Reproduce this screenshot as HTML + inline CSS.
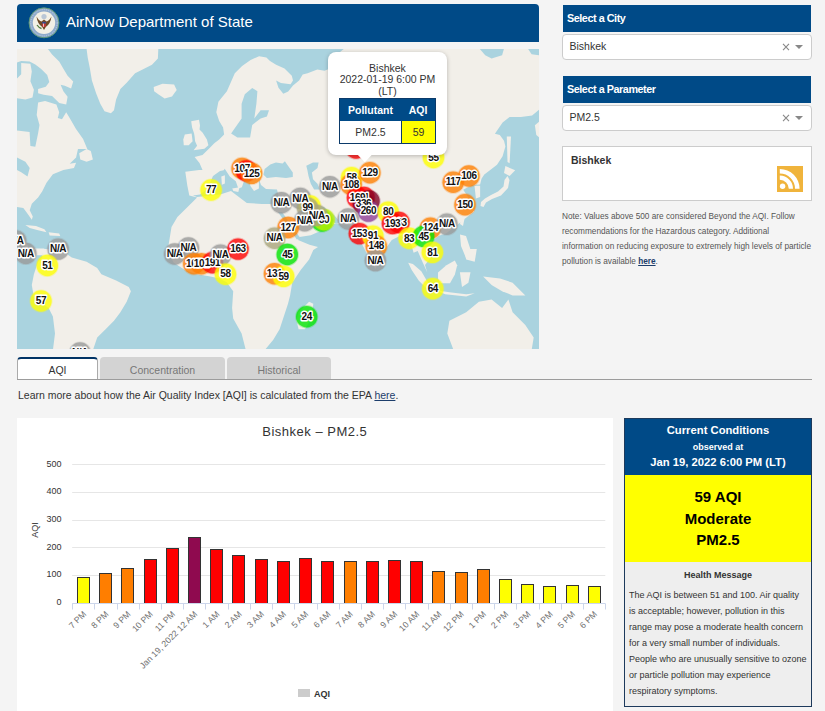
<!DOCTYPE html>
<html><head><meta charset="utf-8">
<style>
*{margin:0;padding:0;box-sizing:border-box}
html,body{width:825px;height:711px;overflow:hidden;background:#f4f4f4;font-family:"Liberation Sans",sans-serif;color:#333}
.a{position:absolute}
#hdr{left:17px;top:4px;width:522px;height:38px;background:#004a87;border-radius:4px 4px 0 0}
#hdr .t{left:49px;top:9px;font-size:15px;color:#fff;white-space:nowrap}
#map{left:17px;top:49px;width:522px;height:300px;background:#aad3df;overflow:hidden}
.sh{left:563px;width:248px;height:27px;background:#004a87;color:#fff;font-weight:bold;font-size:10.8px;letter-spacing:-0.45px;padding:7px 0 0 4px;white-space:nowrap}
.sel{left:562px;width:249.5px;height:26px;background:#fff;border:1px solid #ccc;border-radius:4px;font-size:10.5px;padding:5px 0 0 6.5px}
.sel .x{position:absolute;left:219px;top:8px}
.sel .ar{position:absolute;left:232px;top:10px;width:0;height:0;border-left:4px solid transparent;border-right:4px solid transparent;border-top:4px solid #888}
#cbox{left:562px;top:146px;width:250px;height:55px;background:#fff;border:1px solid #ccc}
#note{left:562px;top:209px;width:250px;font-size:8.25px;line-height:15px;color:#555}
#note b{color:#1c3d6b;text-decoration:underline}
.tab{top:357px;height:23px;background:#d3d3d3;border-radius:4px 4px 0 0;font-size:10.5px;color:#777;text-align:center;padding-top:7px}
#tabline{left:17px;top:379px;width:795px;height:1px;background:#9c9c9c}
#learn{left:18px;top:389px;font-size:10.5px;color:#333;white-space:nowrap}
#learn u{color:#1c3d6b}
#chart{left:17px;top:418px;width:596px;height:293px;background:#fff}
#cc{left:624px;top:418px;width:188px;height:289px;border:1px solid #1d3a5c;background:#eeeeee}
</style></head><body>
<div id="hdr" class="a">
  <svg class="a" style="left:11px;top:3px" width="32" height="32" viewBox="0 0 32 32">
    <circle cx="16" cy="15.8" r="15" fill="#8faacb" stroke="#5f9a6e" stroke-width="0.9"/>
    <circle cx="16" cy="15.8" r="13.2" fill="none" stroke="#c9d6e6" stroke-width="0.8" stroke-dasharray="1 1.2"/>
    <circle cx="16" cy="15.8" r="11.2" fill="#f3f0e6"/>
    <circle cx="16" cy="9.5" r="2.6" fill="#b9c6d6"/>
    <path d="M8.5 9.5 Q9.5 17 14.2 20 L16 23 L17.8 20 Q22.5 17 23.5 9.5 Q21 14 18.5 14.5 L16 12.5 L13.5 14.5 Q11 14 8.5 9.5Z" fill="#6e4a26"/>
    <path d="M9 18 Q11 21 13.5 21.5" stroke="#4f7a3a" stroke-width="1.3" fill="none"/>
    <rect x="14.2" y="14.8" width="3.6" height="5" fill="#c8363a"/>
    <rect x="14.2" y="14.8" width="3.6" height="1.8" fill="#2d4e8e"/>
    <rect x="15.3" y="16.6" width="0.7" height="3.2" fill="#fff"/>
  </svg>
  <div class="a t">AirNow Department of State</div>
</div>
<div id="map" class="a">
<svg class="a" style="left:-17px;top:-49px" width="825" height="711" viewBox="0 0 825 711">
<polygon points="17.0,49.0 47.9,49.0 52.1,54.6 59.2,61.6 63.4,68.7 67.6,75.7 73.2,81.6 71.1,88.4 64.8,85.8 60.6,84.8 63.4,91.2 67.6,96.8 66.2,104.5 59.2,103.1 52.1,96.1 43.7,94.7 38.1,93.3 38.1,89.1 45.8,86.7 49.3,82.0 47.2,75.0 40.9,68.7 35.3,64.5 29.6,61.6 21.2,60.9 17.0,62.4" fill="#f2efe9"/>
<polygon points="21.2,63.1 30.4,63.8 31.8,71.5 30.4,81.3 33.9,89.8 32.5,97.5 25.4,99.6 17.0,98.2 17.0,78.5 21.2,74.3" fill="#f2efe9"/>
<polygon points="38.1,102.4 45.1,101.0 56.4,104.5 59.2,112.2 57.8,117.9 62.0,119.3 66.2,112.2 70.4,119.3 76.0,129.1 83.1,139.0 87.3,148.9 17.0,148.9 17.0,130.5 29.6,131.9 30.4,146.0 35.3,146.7 38.1,133.3 39.5,124.9 36.7,115.1" fill="#f2efe9"/>
<polygon points="86.6,49.0 158.3,49.0 157.9,58.5 152.0,64.8 143.6,69.0 135.1,73.3 126.7,82.7 120.4,89.1 116.1,99.6 114.0,110.2 110.9,113.3 104.5,111.2 100.3,103.8 96.1,93.3 91.9,80.6 89.8,68.0 87.7,57.4" fill="#f2efe9"/>
<polygon points="153.7,87.0 162.5,83.8 174.1,84.4 176.7,90.1 172.0,96.5 164.6,98.6 158.3,94.3 154.1,91.2" fill="#f2efe9"/>
<polygon points="17.0,147.9 78.2,147.9 76.1,157.4 69.7,163.8 76.1,162.7 74.0,168.0 63.4,170.1 52.9,174.3 46.5,182.7 42.3,191.2 38.1,197.5 31.8,203.8 29.7,210.2 32.8,216.5 31.8,219.7 26.5,212.3 23.3,208.1 17.0,207.0" fill="#f2efe9"/>
<polygon points="79.2,153.2 86.6,149.0 90.8,151.1 92.9,159.5 86.6,161.7 80.3,159.5" fill="#f2efe9"/>
<polygon points="25.4,224.9 36.0,226.0 44.4,229.2 46.5,232.3 38.1,230.2 29.7,228.1" fill="#f2efe9"/>
<polygon points="48.6,232.3 59.2,233.4 60.2,235.9 49.7,235.5" fill="#f2efe9"/>
<polygon points="17.0,233.4 23.3,237.6 29.7,249.0 17.0,249.0" fill="#f2efe9"/>
<polygon points="42.3,249.0 59.2,249.0 71.8,257.4 86.6,261.7 97.2,268.0 101.4,274.3 116.1,280.6 128.8,287.0 130.9,291.2 126.7,301.7 120.4,312.3 114.0,320.7 105.6,329.2 97.2,337.6 92.9,350.2 52.9,350.2 55.0,333.4 52.9,316.5 48.6,308.1 33.9,297.5 31.8,284.9 33.9,274.3 38.1,261.7 42.3,257.4" fill="#f2efe9"/>
<polygon points="17.0,248.6 44.4,248.6 42.3,255.3 29.7,255.3 17.0,257.4" fill="#f2efe9"/>
<polygon points="191.2,121.2 199.0,119.7 200.0,125.6 199.5,129.5 202.5,132.5 206.9,139.4 208.4,145.3 204.4,148.7 193.6,150.2 197.1,145.8 195.1,141.3 194.6,136.4 194.1,133.5 192.1,127.6" fill="#f2efe9"/>
<polygon points="184.8,134.4 191.6,133.5 192.6,141.3 188.7,145.3 183.8,145.3 183.3,139.4" fill="#f2efe9"/>
<polygon points="194.6,157.1 202.5,155.1 209.4,148.2 214.3,143.3 219.2,139.4 224.1,134.4 223.1,127.6 219.2,121.0 216.3,112.3 218.4,101.7 226.9,91.2 234.8,73.2 242.1,66.0 250.6,59.9 259.1,56.3 266.4,57.5 270.0,61.1 276.1,64.8 284.5,68.4 291.8,75.7 293.0,80.5 290.6,84.2 280.9,82.9 276.1,80.5 278.5,87.8 283.3,93.8 288.2,91.4 293.0,85.4 299.1,80.5 302.7,74.5 307.6,73.2 317.3,69.6 324.5,70.8 330.0,68.4 336.0,60.0 340.0,52.0 345.0,48.0 540.0,48.0 539.0,109.8 532.1,115.5 520.9,116.9 509.6,116.9 502.6,122.5 494.9,133.7 499.8,135.1 504.0,140.8 505.4,146.4 502.6,156.2 497.0,164.7 489.9,170.3 484.3,174.5 481.5,178.7 480.1,184.4 472.0,185.0 463.2,189.7 470.0,200.0 474.2,211.5 463.2,220.0 456.0,226.1 446.3,233.3 439.0,235.8 432.0,241.0 426.2,249.0 432.0,256.0 425.0,265.0 427.3,272.4 422.5,262.0 417.7,250.9 413.6,252.7 410.0,240.0 402.7,234.5 391.8,240.0 382.7,252.7 375.5,269.1 368.2,256.4 359.1,238.2 350.0,225.5 337.3,223.6 326.4,225.5 320.9,230.8 310.8,235.2 299.4,237.1 298.0,240.0 309.5,244.7 318.0,247.0 313.3,250.0 309.1,259.5 300.7,270.1 292.2,282.7 290.1,295.4 288.0,303.8 283.8,316.5 279.6,329.2 273.3,339.7 264.8,350.0 245.8,350.0 241.6,333.4 233.2,318.6 232.1,308.1 233.2,291.2 226.7,282.2 218.8,278.2 209.0,276.3 197.1,274.3 185.3,270.3 173.5,262.5 167.6,250.6 169.6,238.8 171.5,227.0 177.4,217.1 187.3,207.3 197.1,197.4 189.3,195.5 187.3,185.6 185.3,171.8 199.1,169.9 202.5,170.0 199.5,163.0" fill="#f2efe9"/>
<polygon points="298.6,312.3 309.1,301.7 313.3,303.8 311.2,318.6 304.9,329.2 298.6,329.2 296.5,320.7" fill="#f2efe9"/>
<polygon points="408.2,262.8 412.9,264.0 421.3,271.2 426.1,279.6 430.9,286.7 426.1,287.9 418.9,280.8 411.7,270.0" fill="#f2efe9"/>
<polygon points="438.0,272.4 446.4,265.2 454.8,260.4 457.2,265.2 454.8,274.8 450.0,283.2 440.4,283.2 438.0,278.4" fill="#f2efe9"/>
<polygon points="459.9,272.2 470.5,272.2 468.4,282.7 462.0,287.0" fill="#f2efe9"/>
<polygon points="434.6,290.1 449.4,292.2 466.2,294.3 474.7,293.3 466.2,296.5 445.2,294.3" fill="#f2efe9"/>
<polygon points="483.1,276.4 500.0,278.5 512.6,282.7 525.3,295.4 512.6,295.4 502.1,291.2 491.6,284.9" fill="#f2efe9"/>
<polygon points="449.4,320.7 466.2,312.3 478.9,301.7 491.6,299.6 502.1,308.1 508.4,299.6 512.6,312.3 525.3,324.9 533.7,337.6 531.6,350.2 453.6,350.2 447.3,333.4" fill="#f2efe9"/>
<polygon points="464.1,249.0 476.8,249.0 474.7,261.7 466.2,259.5" fill="#f2efe9"/>
<polygon points="17.0,157.4 25.4,161.7 29.7,168.0 27.5,176.4 21.2,172.2 17.0,170.1" fill="#aad3df"/>
<polygon points="478.9,47.9 504.2,47.9 502.1,55.3 491.6,58.5 485.2,55.3" fill="#aad3df"/>
<polygon points="527.4,47.9 540.1,47.9 540.1,55.3 531.6,54.3" fill="#aad3df"/>
<polygon points="244.8,94.3 252.2,88.0 257.4,91.2 256.4,103.8 254.3,118.6 260.6,110.2 269.0,110.2 266.9,116.5 260.6,118.6 252.2,124.9 250.1,137.6 237.4,137.6 231.1,133.4 241.6,118.6 241.6,103.8" fill="#aad3df"/>
<polygon points="193.0,195.5 200.0,194.5 206.0,190.0 210.0,183.0 213.0,176.0 220.0,171.0 223.7,170.3 231.0,160.6 249.2,176.4 258.9,178.8 261.0,185.0 266.0,189.0 277.0,189.5 278.5,196.0 275.0,204.0 262.0,204.0 246.8,203.0 231.0,190.9 220.1,194.5 197.0,197.0" fill="#aad3df"/>
<polygon points="264.6,169.1 270.3,164.6 275.9,162.4 282.6,163.5 284.9,161.3 287.1,164.6 292.8,172.5 292.8,177.0 286.0,178.1 275.9,177.0 266.9,178.1 263.5,174.8" fill="#aad3df"/>
<polygon points="306.3,165.8 313.0,162.4 318.6,162.4 317.5,168.0 311.9,172.5 313.0,179.3 317.5,183.8 319.8,189.4 314.1,189.4 310.8,183.8 308.5,175.9 307.4,170.3" fill="#aad3df"/>
<polygon points="318.0,206.0 324.0,207.0 334.0,215.0 340.0,222.0 336.0,224.0 326.0,216.0 318.0,210.0" fill="#aad3df"/>
<polygon points="278.0,212.0 282.0,212.0 300.6,238.4 296.8,239.6" fill="#aad3df"/>
<polygon points="506.8,136.6 511.0,136.6 509.6,163.3 507.5,161.9" fill="#f2efe9"/>
<polygon points="505.4,166.1 515.2,170.3 509.6,175.9 504.0,173.1" fill="#f2efe9"/>
<polygon points="507.5,176.0 509.5,180.0 508.0,188.0 501.0,195.5 492.0,199.0 486.0,202.5 483.5,207.0 480.5,206.0 481.0,202.0 485.0,198.5 491.0,195.0 498.0,191.5 503.5,186.5 504.5,180.0" fill="#f2efe9"/>
<polygon points="474.5,185.8 480.1,185.8 480.1,197.0 475.9,198.4" fill="#f2efe9"/>
<polygon points="534.9,125.3 540.0,121.0 540.0,138.0 536.3,135.1" fill="#f2efe9"/>
<polygon points="460.8,218.8 464.5,218.8 463.0,226.0 460.0,224.0" fill="#f2efe9"/>
<polygon points="460.0,234.5 466.0,236.0 470.0,248.0 473.0,260.0 466.0,258.0 461.0,246.0" fill="#f2efe9"/>
<polygon points="222.5,159.4 231.0,158.2 239.5,167.9 248.0,176.4 249.2,181.2 244.3,180.0 241.9,187.3 238.3,188.5 235.8,181.2 229.8,176.4 224.9,169.1" fill="#f2efe9"/>
<polygon points="232.2,188.5 239.5,187.3 238.3,192.1 233.4,190.9" fill="#f2efe9"/>
<polygon points="221.3,176.4 224.9,175.2 224.9,183.6 221.9,184.8" fill="#f2efe9"/>
<polygon points="249.2,176.4 258.9,177.6 258.9,188.5 254.0,190.9 250.4,186.1" fill="#f2efe9"/>
<g font-family="Liberation Sans, sans-serif" font-weight="bold" font-size="10" letter-spacing="-0.4" text-anchor="middle">
<circle cx="356" cy="148" r="11.6" fill="#ff0000" fill-opacity="0.25"/><circle cx="356" cy="148" r="10.7" fill="#ff0000" fill-opacity="0.72"/>
<circle cx="15.7" cy="240.8" r="11.6" fill="#999999" fill-opacity="0.25"/><circle cx="15.7" cy="240.8" r="10.7" fill="#999999" fill-opacity="0.72"/>
<circle cx="25.8" cy="253.5" r="11.6" fill="#999999" fill-opacity="0.25"/><circle cx="25.8" cy="253.5" r="10.7" fill="#999999" fill-opacity="0.72"/>
<circle cx="58.1" cy="249.1" r="11.6" fill="#999999" fill-opacity="0.25"/><circle cx="58.1" cy="249.1" r="10.7" fill="#999999" fill-opacity="0.72"/>
<circle cx="47.3" cy="265.5" r="11.6" fill="#ffff00" fill-opacity="0.25"/><circle cx="47.3" cy="265.5" r="10.7" fill="#ffff00" fill-opacity="0.72"/>
<circle cx="41" cy="301" r="11.6" fill="#ffff00" fill-opacity="0.25"/><circle cx="41" cy="301" r="10.7" fill="#ffff00" fill-opacity="0.72"/>
<circle cx="80" cy="353" r="11.6" fill="#999999" fill-opacity="0.25"/><circle cx="80" cy="353" r="10.7" fill="#999999" fill-opacity="0.72"/>
<circle cx="242.1" cy="168.4" r="11.6" fill="#ff7e00" fill-opacity="0.25"/><circle cx="242.1" cy="168.4" r="10.7" fill="#ff7e00" fill-opacity="0.72"/>
<circle cx="246.5" cy="170.9" r="11.6" fill="#ff0000" fill-opacity="0.25"/><circle cx="246.5" cy="170.9" r="10.7" fill="#ff0000" fill-opacity="0.72"/>
<circle cx="251.6" cy="173.4" r="11.6" fill="#ff7e00" fill-opacity="0.25"/><circle cx="251.6" cy="173.4" r="10.7" fill="#ff7e00" fill-opacity="0.72"/>
<circle cx="211.1" cy="190" r="11.6" fill="#ffff00" fill-opacity="0.25"/><circle cx="211.1" cy="190" r="10.7" fill="#ffff00" fill-opacity="0.72"/>
<circle cx="174.7" cy="254" r="11.6" fill="#999999" fill-opacity="0.25"/><circle cx="174.7" cy="254" r="10.7" fill="#999999" fill-opacity="0.72"/>
<circle cx="188.4" cy="248" r="11.6" fill="#999999" fill-opacity="0.25"/><circle cx="188.4" cy="248" r="10.7" fill="#999999" fill-opacity="0.72"/>
<circle cx="193.8" cy="263.8" r="11.6" fill="#ff7e00" fill-opacity="0.25"/><circle cx="193.8" cy="263.8" r="10.7" fill="#ff7e00" fill-opacity="0.72"/>
<circle cx="201.5" cy="263.8" r="11.6" fill="#ff7e00" fill-opacity="0.25"/><circle cx="201.5" cy="263.8" r="10.7" fill="#ff7e00" fill-opacity="0.72"/>
<circle cx="212.4" cy="262.7" r="11.6" fill="#ff0000" fill-opacity="0.25"/><circle cx="212.4" cy="262.7" r="10.7" fill="#ff0000" fill-opacity="0.72"/>
<circle cx="220.5" cy="255.1" r="11.6" fill="#999999" fill-opacity="0.25"/><circle cx="220.5" cy="255.1" r="10.7" fill="#999999" fill-opacity="0.72"/>
<circle cx="238" cy="249.1" r="11.6" fill="#ff0000" fill-opacity="0.25"/><circle cx="238" cy="249.1" r="10.7" fill="#ff0000" fill-opacity="0.72"/>
<circle cx="225.5" cy="274.2" r="11.6" fill="#ffff00" fill-opacity="0.25"/><circle cx="225.5" cy="274.2" r="10.7" fill="#ffff00" fill-opacity="0.72"/>
<circle cx="281.4" cy="202.8" r="11.6" fill="#999999" fill-opacity="0.25"/><circle cx="281.4" cy="202.8" r="10.7" fill="#999999" fill-opacity="0.72"/>
<circle cx="300.3" cy="198.4" r="11.6" fill="#999999" fill-opacity="0.25"/><circle cx="300.3" cy="198.4" r="10.7" fill="#999999" fill-opacity="0.72"/>
<circle cx="310" cy="206" r="11.6" fill="#ffff00" fill-opacity="0.25"/><circle cx="310" cy="206" r="10.7" fill="#ffff00" fill-opacity="0.72"/>
<circle cx="307.6" cy="208.1" r="11.6" fill="#a9a57c" fill-opacity="0.25"/><circle cx="307.6" cy="208.1" r="10.7" fill="#a9a57c" fill-opacity="0.72"/>
<circle cx="322" cy="221" r="11.6" fill="#00e400" fill-opacity="0.25"/><circle cx="322" cy="221" r="10.7" fill="#00e400" fill-opacity="0.72"/>
<circle cx="324.1" cy="219.8" r="11.6" fill="#bff000" fill-opacity="0.25"/><circle cx="324.1" cy="219.8" r="10.7" fill="#bff000" fill-opacity="0.72"/>
<circle cx="316.8" cy="215.4" r="11.6" fill="#a9a57c" fill-opacity="0.25"/><circle cx="316.8" cy="215.4" r="10.7" fill="#a9a57c" fill-opacity="0.72"/>
<circle cx="304.7" cy="220.7" r="11.6" fill="#999999" fill-opacity="0.25"/><circle cx="304.7" cy="220.7" r="10.7" fill="#999999" fill-opacity="0.72"/>
<circle cx="288.2" cy="227.5" r="11.6" fill="#ff7e00" fill-opacity="0.25"/><circle cx="288.2" cy="227.5" r="10.7" fill="#ff7e00" fill-opacity="0.72"/>
<circle cx="274.6" cy="238.2" r="11.6" fill="#a9a57c" fill-opacity="0.25"/><circle cx="274.6" cy="238.2" r="10.7" fill="#a9a57c" fill-opacity="0.72"/>
<circle cx="287.3" cy="254.5" r="11.6" fill="#00e400" fill-opacity="0.25"/><circle cx="287.3" cy="254.5" r="10.7" fill="#00e400" fill-opacity="0.72"/>
<circle cx="274.5" cy="273.8" r="11.6" fill="#ff7e00" fill-opacity="0.25"/><circle cx="274.5" cy="273.8" r="10.7" fill="#ff7e00" fill-opacity="0.72"/>
<circle cx="283.6" cy="276.4" r="11.6" fill="#ffff00" fill-opacity="0.25"/><circle cx="283.6" cy="276.4" r="10.7" fill="#ffff00" fill-opacity="0.72"/>
<circle cx="306.7" cy="316.7" r="11.6" fill="#00e400" fill-opacity="0.25"/><circle cx="306.7" cy="316.7" r="10.7" fill="#00e400" fill-opacity="0.72"/>
<circle cx="329.9" cy="186.8" r="11.6" fill="#999999" fill-opacity="0.25"/><circle cx="329.9" cy="186.8" r="10.7" fill="#999999" fill-opacity="0.72"/>
<circle cx="351.6" cy="177.6" r="11.6" fill="#ffff00" fill-opacity="0.25"/><circle cx="351.6" cy="177.6" r="10.7" fill="#ffff00" fill-opacity="0.72"/>
<circle cx="369.9" cy="172.7" r="11.6" fill="#ff7e00" fill-opacity="0.25"/><circle cx="369.9" cy="172.7" r="10.7" fill="#ff7e00" fill-opacity="0.72"/>
<circle cx="351.2" cy="184.5" r="11.6" fill="#ff7e00" fill-opacity="0.25"/><circle cx="351.2" cy="184.5" r="10.7" fill="#ff7e00" fill-opacity="0.72"/>
<circle cx="364" cy="197.5" r="11.6" fill="#ff0000" fill-opacity="0.25"/><circle cx="364" cy="197.5" r="10.7" fill="#ff0000" fill-opacity="0.72"/>
<circle cx="357.5" cy="197.8" r="11.6" fill="#ff0000" fill-opacity="0.25"/><circle cx="357.5" cy="197.8" r="10.7" fill="#ff0000" fill-opacity="0.72"/>
<circle cx="369" cy="201" r="11.6" fill="#7e0023" fill-opacity="0.25"/><circle cx="369" cy="201" r="10.7" fill="#7e0023" fill-opacity="0.72"/>
<circle cx="363.5" cy="203.7" r="11.6" fill="#7e0023" fill-opacity="0.25"/><circle cx="363.5" cy="203.7" r="10.7" fill="#7e0023" fill-opacity="0.72"/>
<circle cx="368.4" cy="211.1" r="11.6" fill="#8f3f97" fill-opacity="0.25"/><circle cx="368.4" cy="211.1" r="10.7" fill="#8f3f97" fill-opacity="0.72"/>
<circle cx="348.2" cy="219" r="11.6" fill="#999999" fill-opacity="0.25"/><circle cx="348.2" cy="219" r="10.7" fill="#999999" fill-opacity="0.72"/>
<circle cx="388.2" cy="212.1" r="11.6" fill="#ffff00" fill-opacity="0.25"/><circle cx="388.2" cy="212.1" r="10.7" fill="#ffff00" fill-opacity="0.72"/>
<circle cx="399" cy="222.5" r="11.6" fill="#ff0000" fill-opacity="0.25"/><circle cx="399" cy="222.5" r="10.7" fill="#ff0000" fill-opacity="0.72"/>
<circle cx="392.5" cy="223.5" r="11.6" fill="#ff0000" fill-opacity="0.25"/><circle cx="392.5" cy="223.5" r="10.7" fill="#ff0000" fill-opacity="0.72"/>
<circle cx="359.4" cy="233.6" r="11.6" fill="#ff0000" fill-opacity="0.25"/><circle cx="359.4" cy="233.6" r="10.7" fill="#ff0000" fill-opacity="0.72"/>
<circle cx="372.9" cy="236.1" r="11.6" fill="#ffff00" fill-opacity="0.25"/><circle cx="372.9" cy="236.1" r="10.7" fill="#ffff00" fill-opacity="0.72"/>
<circle cx="376.3" cy="246.2" r="11.6" fill="#ff7e00" fill-opacity="0.25"/><circle cx="376.3" cy="246.2" r="10.7" fill="#ff7e00" fill-opacity="0.72"/>
<circle cx="375.4" cy="260.6" r="11.6" fill="#999999" fill-opacity="0.25"/><circle cx="375.4" cy="260.6" r="10.7" fill="#999999" fill-opacity="0.72"/>
<circle cx="409.1" cy="238.3" r="11.6" fill="#ffff00" fill-opacity="0.25"/><circle cx="409.1" cy="238.3" r="10.7" fill="#ffff00" fill-opacity="0.72"/>
<circle cx="430.4" cy="228.1" r="11.6" fill="#ff7e00" fill-opacity="0.25"/><circle cx="430.4" cy="228.1" r="10.7" fill="#ff7e00" fill-opacity="0.72"/>
<circle cx="446.9" cy="224.2" r="11.6" fill="#999999" fill-opacity="0.25"/><circle cx="446.9" cy="224.2" r="10.7" fill="#999999" fill-opacity="0.72"/>
<circle cx="423.6" cy="236.4" r="11.6" fill="#00e400" fill-opacity="0.25"/><circle cx="423.6" cy="236.4" r="10.7" fill="#00e400" fill-opacity="0.72"/>
<circle cx="432.4" cy="252.4" r="11.6" fill="#ffff00" fill-opacity="0.25"/><circle cx="432.4" cy="252.4" r="10.7" fill="#ffff00" fill-opacity="0.72"/>
<circle cx="432.8" cy="288.7" r="11.6" fill="#ffff00" fill-opacity="0.25"/><circle cx="432.8" cy="288.7" r="10.7" fill="#ffff00" fill-opacity="0.72"/>
<circle cx="433.5" cy="157.5" r="11.6" fill="#ffff00" fill-opacity="0.25"/><circle cx="433.5" cy="157.5" r="10.7" fill="#ffff00" fill-opacity="0.72"/>
<circle cx="453.2" cy="182.2" r="11.6" fill="#ff7e00" fill-opacity="0.25"/><circle cx="453.2" cy="182.2" r="10.7" fill="#ff7e00" fill-opacity="0.72"/>
<circle cx="468.9" cy="176" r="11.6" fill="#ff7e00" fill-opacity="0.25"/><circle cx="468.9" cy="176" r="10.7" fill="#ff7e00" fill-opacity="0.72"/>
<circle cx="465" cy="204.7" r="11.6" fill="#ff7e00" fill-opacity="0.25"/><circle cx="465" cy="204.7" r="10.7" fill="#ff7e00" fill-opacity="0.72"/>
<text x="15.7" y="244.0" fill="#111" stroke="#fff" stroke-width="2.8" stroke-linejoin="round" paint-order="stroke">N/A</text>
<text x="25.8" y="256.7" fill="#111" stroke="#fff" stroke-width="2.8" stroke-linejoin="round" paint-order="stroke">N/A</text>
<text x="58.1" y="252.3" fill="#111" stroke="#fff" stroke-width="2.8" stroke-linejoin="round" paint-order="stroke">N/A</text>
<text x="47.3" y="268.7" fill="#111" stroke="#fff" stroke-width="2.8" stroke-linejoin="round" paint-order="stroke">51</text>
<text x="41" y="304.2" fill="#111" stroke="#fff" stroke-width="2.8" stroke-linejoin="round" paint-order="stroke">57</text>
<text x="80" y="356.2" fill="#111" stroke="#fff" stroke-width="2.8" stroke-linejoin="round" paint-order="stroke">N/A</text>
<text x="242.1" y="171.6" fill="#111" stroke="#fff" stroke-width="2.8" stroke-linejoin="round" paint-order="stroke">107</text>
<text x="251.6" y="176.6" fill="#111" stroke="#fff" stroke-width="2.8" stroke-linejoin="round" paint-order="stroke">125</text>
<text x="211.1" y="193.2" fill="#111" stroke="#fff" stroke-width="2.8" stroke-linejoin="round" paint-order="stroke">77</text>
<text x="174.7" y="257.2" fill="#111" stroke="#fff" stroke-width="2.8" stroke-linejoin="round" paint-order="stroke">N/A</text>
<text x="188.4" y="251.2" fill="#111" stroke="#fff" stroke-width="2.8" stroke-linejoin="round" paint-order="stroke">N/A</text>
<text x="193.8" y="267.0" fill="#111" stroke="#fff" stroke-width="2.8" stroke-linejoin="round" paint-order="stroke">101</text>
<text x="201.5" y="267.0" fill="#111" stroke="#fff" stroke-width="2.8" stroke-linejoin="round" paint-order="stroke">101</text>
<text x="212.4" y="265.9" fill="#111" stroke="#fff" stroke-width="2.8" stroke-linejoin="round" paint-order="stroke">191</text>
<text x="220.5" y="258.3" fill="#111" stroke="#fff" stroke-width="2.8" stroke-linejoin="round" paint-order="stroke">N/A</text>
<text x="238" y="252.3" fill="#111" stroke="#fff" stroke-width="2.8" stroke-linejoin="round" paint-order="stroke">163</text>
<text x="225.5" y="277.4" fill="#111" stroke="#fff" stroke-width="2.8" stroke-linejoin="round" paint-order="stroke">58</text>
<text x="281.4" y="206.0" fill="#111" stroke="#fff" stroke-width="2.8" stroke-linejoin="round" paint-order="stroke">N/A</text>
<text x="300.3" y="201.6" fill="#111" stroke="#fff" stroke-width="2.8" stroke-linejoin="round" paint-order="stroke">N/A</text>
<text x="307.6" y="211.3" fill="#111" stroke="#fff" stroke-width="2.8" stroke-linejoin="round" paint-order="stroke">99</text>
<text x="324.1" y="223.0" fill="#111" stroke="#fff" stroke-width="2.8" stroke-linejoin="round" paint-order="stroke">30</text>
<text x="316.8" y="218.6" fill="#111" stroke="#fff" stroke-width="2.8" stroke-linejoin="round" paint-order="stroke">N/A</text>
<text x="304.7" y="223.9" fill="#111" stroke="#fff" stroke-width="2.8" stroke-linejoin="round" paint-order="stroke">N/A</text>
<text x="288.2" y="230.7" fill="#111" stroke="#fff" stroke-width="2.8" stroke-linejoin="round" paint-order="stroke">127</text>
<text x="274.6" y="241.4" fill="#111" stroke="#fff" stroke-width="2.8" stroke-linejoin="round" paint-order="stroke">N/A</text>
<text x="287.3" y="257.7" fill="#111" stroke="#fff" stroke-width="2.8" stroke-linejoin="round" paint-order="stroke">45</text>
<text x="274.5" y="277.0" fill="#111" stroke="#fff" stroke-width="2.8" stroke-linejoin="round" paint-order="stroke">131</text>
<text x="283.6" y="279.6" fill="#111" stroke="#fff" stroke-width="2.8" stroke-linejoin="round" paint-order="stroke">59</text>
<text x="306.7" y="319.9" fill="#111" stroke="#fff" stroke-width="2.8" stroke-linejoin="round" paint-order="stroke">24</text>
<text x="329.9" y="190.0" fill="#111" stroke="#fff" stroke-width="2.8" stroke-linejoin="round" paint-order="stroke">N/A</text>
<text x="351.6" y="180.8" fill="#111" stroke="#fff" stroke-width="2.8" stroke-linejoin="round" paint-order="stroke">58</text>
<text x="369.9" y="175.9" fill="#111" stroke="#fff" stroke-width="2.8" stroke-linejoin="round" paint-order="stroke">129</text>
<text x="351.2" y="187.7" fill="#111" stroke="#fff" stroke-width="2.8" stroke-linejoin="round" paint-order="stroke">108</text>
<text x="364" y="200.7" fill="#111" stroke="#fff" stroke-width="2.8" stroke-linejoin="round" paint-order="stroke">91</text>
<text x="357.5" y="201.0" fill="#111" stroke="#fff" stroke-width="2.8" stroke-linejoin="round" paint-order="stroke">169</text>
<text x="363.5" y="206.9" fill="#111" stroke="#fff" stroke-width="2.8" stroke-linejoin="round" paint-order="stroke">336</text>
<text x="368.4" y="214.3" fill="#111" stroke="#fff" stroke-width="2.8" stroke-linejoin="round" paint-order="stroke">260</text>
<text x="348.2" y="222.2" fill="#111" stroke="#fff" stroke-width="2.8" stroke-linejoin="round" paint-order="stroke">N/A</text>
<text x="388.2" y="215.3" fill="#111" stroke="#fff" stroke-width="2.8" stroke-linejoin="round" paint-order="stroke">80</text>
<text x="399" y="225.7" fill="#111" stroke="#fff" stroke-width="2.8" stroke-linejoin="round" paint-order="stroke">133</text>
<text x="392.5" y="226.7" fill="#111" stroke="#fff" stroke-width="2.8" stroke-linejoin="round" paint-order="stroke">193</text>
<text x="359.4" y="236.8" fill="#111" stroke="#fff" stroke-width="2.8" stroke-linejoin="round" paint-order="stroke">153</text>
<text x="372.9" y="239.3" fill="#111" stroke="#fff" stroke-width="2.8" stroke-linejoin="round" paint-order="stroke">91</text>
<text x="376.3" y="249.4" fill="#111" stroke="#fff" stroke-width="2.8" stroke-linejoin="round" paint-order="stroke">148</text>
<text x="375.4" y="263.8" fill="#111" stroke="#fff" stroke-width="2.8" stroke-linejoin="round" paint-order="stroke">N/A</text>
<text x="409.1" y="241.5" fill="#111" stroke="#fff" stroke-width="2.8" stroke-linejoin="round" paint-order="stroke">83</text>
<text x="430.4" y="231.3" fill="#111" stroke="#fff" stroke-width="2.8" stroke-linejoin="round" paint-order="stroke">124</text>
<text x="446.9" y="227.4" fill="#111" stroke="#fff" stroke-width="2.8" stroke-linejoin="round" paint-order="stroke">N/A</text>
<text x="423.6" y="239.6" fill="#111" stroke="#fff" stroke-width="2.8" stroke-linejoin="round" paint-order="stroke">45</text>
<text x="432.4" y="255.6" fill="#111" stroke="#fff" stroke-width="2.8" stroke-linejoin="round" paint-order="stroke">81</text>
<text x="432.8" y="291.9" fill="#111" stroke="#fff" stroke-width="2.8" stroke-linejoin="round" paint-order="stroke">64</text>
<text x="433.5" y="160.7" fill="#111" stroke="#fff" stroke-width="2.8" stroke-linejoin="round" paint-order="stroke">55</text>
<text x="453.2" y="185.4" fill="#111" stroke="#fff" stroke-width="2.8" stroke-linejoin="round" paint-order="stroke">117</text>
<text x="468.9" y="179.2" fill="#111" stroke="#fff" stroke-width="2.8" stroke-linejoin="round" paint-order="stroke">106</text>
<text x="465" y="207.9" fill="#111" stroke="#fff" stroke-width="2.8" stroke-linejoin="round" paint-order="stroke">150</text>
</g>
</svg>
</div>
<div class="a" style="left:328px;top:52px;width:119px;height:103px;background:#fff;border-radius:8px;box-shadow:0 1px 4px rgba(0,0,0,0.25)"></div>
<svg class="a" style="left:352px;top:154px" width="26" height="10" viewBox="0 0 26 10"><path d="M5 0 L12.8 8.2 L20.6 0Z" fill="#fff"/></svg>
<div class="a" style="left:328px;top:63px;width:119px;text-align:center;font-size:10.5px;line-height:11.3px;color:#333">Bishkek<br>2022-01-19 6:00 PM<br>(LT)</div>
<div class="a" style="left:339px;top:98px;width:97px;height:46px;border:1px solid #0b3a6a;background:#fff">
 <div class="a" style="left:0;top:0;width:95px;height:22px;background:#004a87"></div>
 <div class="a" style="left:0;top:5px;width:61px;text-align:center;color:#fff;font-weight:bold;font-size:10.5px">Pollutant</div>
 <div class="a" style="left:61px;top:5px;width:34px;text-align:center;color:#fff;font-weight:bold;font-size:10.5px">AQI</div>
 <div class="a" style="left:61px;top:22px;width:1px;height:22px;background:#0b3a6a"></div>
 <div class="a" style="left:62px;top:22px;width:33px;height:22px;background:#ffff00"></div>
 <div class="a" style="left:0;top:27px;width:61px;text-align:center;color:#333;font-size:10.5px">PM2.5</div>
 <div class="a" style="left:62px;top:27px;width:33px;text-align:center;color:#333;font-size:10.5px">59</div>
</div>


<div class="a sh" style="top:5px">Select a City</div>
<div class="a sel" style="top:34px">Bishkek<svg class="x" width="8" height="8" viewBox="0 0 8 8"><path d="M1 0.8 L7 7.2 M7 0.8 L1 7.2" stroke="#888" stroke-width="1.1"/></svg><span class="ar"></span></div>
<div class="a sh" style="top:76px">Select a Parameter</div>
<div class="a sel" style="top:105px">PM2.5<svg class="x" width="8" height="8" viewBox="0 0 8 8"><path d="M1 0.8 L7 7.2 M7 0.8 L1 7.2" stroke="#888" stroke-width="1.1"/></svg><span class="ar"></span></div>

<div id="cbox" class="a">
  <div class="a" style="left:8px;top:7px;font-size:10.5px;font-weight:bold;color:#333">Bishkek</div>
  <svg class="a" style="left:214px;top:19px" width="26" height="26" viewBox="0 0 26 26">
    <rect width="26" height="26" fill="#f0b43c"/>
    <circle cx="5.6" cy="20.2" r="2.7" fill="#fff"/>
    <path d="M2.8 9.6 A13.2 13.2 0 0 1 16 22.8 L11.8 22.8 A9 9 0 0 0 2.8 13.8Z" fill="#fff"/>
    <path d="M2.8 3 A19.8 19.8 0 0 1 22.6 22.8 L18 22.8 A15.2 15.2 0 0 0 2.8 7.6Z" fill="#fff"/>
  </svg>
</div>
<div id="note" class="a">Note: Values above 500 are considered Beyond the AQI. Follow recommendations for the Hazardous category. Additional information on reducing exposure to extremely high levels of particle pollution is available <b>here</b>.</div>

<div class="a tab" style="left:17px;width:81px;background:#fff;border:1px solid #aaa;border-top:2px solid #003366;border-bottom:none;color:#333;padding-top:5px">AQI</div>
<div class="a tab" style="left:100px;width:125px">Concentration</div>
<div class="a tab" style="left:227px;width:104px">Historical</div>
<div id="tabline" class="a"></div>
<div id="learn" class="a">Learn more about how the Air Quality Index [AQI] is calculated from the EPA <u>here</u>.</div>

<div id="chart" class="a">
</div>
<svg class="a" style="left:0;top:0" width="825" height="711" viewBox="0 0 825 711">
<line x1="72.2" x2="605.3" y1="575.5" y2="575.5" stroke="#e6e6e6" stroke-width="1"/>
<line x1="72.2" x2="605.3" y1="547.5" y2="547.5" stroke="#e6e6e6" stroke-width="1"/>
<line x1="72.2" x2="605.3" y1="520.5" y2="520.5" stroke="#e6e6e6" stroke-width="1"/>
<line x1="72.2" x2="605.3" y1="492.5" y2="492.5" stroke="#e6e6e6" stroke-width="1"/>
<line x1="72.2" x2="605.3" y1="464.5" y2="464.5" stroke="#e6e6e6" stroke-width="1"/>
<text x="61.5" y="604.8" text-anchor="end" font-size="9" fill="#333">0</text>
<text x="61.5" y="577.2" text-anchor="end" font-size="9" fill="#333">100</text>
<text x="61.5" y="549.6" text-anchor="end" font-size="9" fill="#333">200</text>
<text x="61.5" y="521.9" text-anchor="end" font-size="9" fill="#333">300</text>
<text x="61.5" y="494.3" text-anchor="end" font-size="9" fill="#333">400</text>
<text x="61.5" y="466.7" text-anchor="end" font-size="9" fill="#333">500</text>
<rect x="77.5" y="577.5" width="12" height="26.0" fill="#ffff00" stroke="#333" stroke-width="1"/>
<rect x="99.5" y="573.5" width="12" height="30.0" fill="#ff7e00" stroke="#333" stroke-width="1"/>
<rect x="121.5" y="568.5" width="12" height="35.0" fill="#ff7e00" stroke="#333" stroke-width="1"/>
<rect x="144.5" y="559.5" width="12" height="44.0" fill="#ff0000" stroke="#333" stroke-width="1"/>
<rect x="166.5" y="548.5" width="12" height="55.0" fill="#ff0000" stroke="#333" stroke-width="1"/>
<rect x="188.5" y="537.5" width="12" height="66.0" fill="#8f0a4f" stroke="#333" stroke-width="1"/>
<rect x="210.5" y="549.5" width="12" height="54.0" fill="#ff0000" stroke="#333" stroke-width="1"/>
<rect x="232.5" y="555.5" width="12" height="48.0" fill="#ff0000" stroke="#333" stroke-width="1"/>
<rect x="255.5" y="559.5" width="12" height="44.0" fill="#ff0000" stroke="#333" stroke-width="1"/>
<rect x="277.5" y="561.5" width="12" height="42.0" fill="#ff0000" stroke="#333" stroke-width="1"/>
<rect x="299.5" y="558.5" width="12" height="45.0" fill="#ff0000" stroke="#333" stroke-width="1"/>
<rect x="321.5" y="561.5" width="12" height="42.0" fill="#ff0000" stroke="#333" stroke-width="1"/>
<rect x="344.5" y="561.5" width="12" height="42.0" fill="#ff7e00" stroke="#333" stroke-width="1"/>
<rect x="366.5" y="561.5" width="12" height="42.0" fill="#ff0000" stroke="#333" stroke-width="1"/>
<rect x="388.5" y="560.5" width="12" height="43.0" fill="#ff0000" stroke="#333" stroke-width="1"/>
<rect x="410.5" y="561.5" width="12" height="42.0" fill="#ff0000" stroke="#333" stroke-width="1"/>
<rect x="432.5" y="571.5" width="12" height="32.0" fill="#ff7e00" stroke="#333" stroke-width="1"/>
<rect x="455.5" y="572.5" width="12" height="31.0" fill="#ff7e00" stroke="#333" stroke-width="1"/>
<rect x="477.5" y="569.5" width="12" height="34.0" fill="#ff7e00" stroke="#333" stroke-width="1"/>
<rect x="499.5" y="579.5" width="12" height="24.0" fill="#ffff00" stroke="#333" stroke-width="1"/>
<rect x="521.5" y="584.5" width="12" height="19.0" fill="#ffff00" stroke="#333" stroke-width="1"/>
<rect x="543.5" y="586.5" width="12" height="17.0" fill="#ffff00" stroke="#333" stroke-width="1"/>
<rect x="566.5" y="585.5" width="12" height="18.0" fill="#ffff00" stroke="#333" stroke-width="1"/>
<rect x="588.5" y="586.5" width="12" height="17.0" fill="#ffff00" stroke="#333" stroke-width="1"/>
<line x1="72.2" x2="605.3" y1="603.5" y2="603.5" stroke="#ccd6eb" stroke-width="1"/>
<line x1="72.5" x2="72.5" y1="603.5" y2="609.5" stroke="#ccd6eb" stroke-width="1"/>
<line x1="94.5" x2="94.5" y1="603.5" y2="609.5" stroke="#ccd6eb" stroke-width="1"/>
<line x1="117.5" x2="117.5" y1="603.5" y2="609.5" stroke="#ccd6eb" stroke-width="1"/>
<line x1="139.5" x2="139.5" y1="603.5" y2="609.5" stroke="#ccd6eb" stroke-width="1"/>
<line x1="161.5" x2="161.5" y1="603.5" y2="609.5" stroke="#ccd6eb" stroke-width="1"/>
<line x1="183.5" x2="183.5" y1="603.5" y2="609.5" stroke="#ccd6eb" stroke-width="1"/>
<line x1="205.5" x2="205.5" y1="603.5" y2="609.5" stroke="#ccd6eb" stroke-width="1"/>
<line x1="228.5" x2="228.5" y1="603.5" y2="609.5" stroke="#ccd6eb" stroke-width="1"/>
<line x1="250.5" x2="250.5" y1="603.5" y2="609.5" stroke="#ccd6eb" stroke-width="1"/>
<line x1="272.5" x2="272.5" y1="603.5" y2="609.5" stroke="#ccd6eb" stroke-width="1"/>
<line x1="294.5" x2="294.5" y1="603.5" y2="609.5" stroke="#ccd6eb" stroke-width="1"/>
<line x1="317.5" x2="317.5" y1="603.5" y2="609.5" stroke="#ccd6eb" stroke-width="1"/>
<line x1="339.5" x2="339.5" y1="603.5" y2="609.5" stroke="#ccd6eb" stroke-width="1"/>
<line x1="361.5" x2="361.5" y1="603.5" y2="609.5" stroke="#ccd6eb" stroke-width="1"/>
<line x1="383.5" x2="383.5" y1="603.5" y2="609.5" stroke="#ccd6eb" stroke-width="1"/>
<line x1="405.5" x2="405.5" y1="603.5" y2="609.5" stroke="#ccd6eb" stroke-width="1"/>
<line x1="428.5" x2="428.5" y1="603.5" y2="609.5" stroke="#ccd6eb" stroke-width="1"/>
<line x1="450.5" x2="450.5" y1="603.5" y2="609.5" stroke="#ccd6eb" stroke-width="1"/>
<line x1="472.5" x2="472.5" y1="603.5" y2="609.5" stroke="#ccd6eb" stroke-width="1"/>
<line x1="494.5" x2="494.5" y1="603.5" y2="609.5" stroke="#ccd6eb" stroke-width="1"/>
<line x1="516.5" x2="516.5" y1="603.5" y2="609.5" stroke="#ccd6eb" stroke-width="1"/>
<line x1="539.5" x2="539.5" y1="603.5" y2="609.5" stroke="#ccd6eb" stroke-width="1"/>
<line x1="561.5" x2="561.5" y1="603.5" y2="609.5" stroke="#ccd6eb" stroke-width="1"/>
<line x1="583.5" x2="583.5" y1="603.5" y2="609.5" stroke="#ccd6eb" stroke-width="1"/>
<line x1="605.5" x2="605.5" y1="603.5" y2="609.5" stroke="#ccd6eb" stroke-width="1"/>
<text transform="translate(86.8,614.6) rotate(-45)" text-anchor="end" font-size="8.7" fill="#6e6e6e">7 PM</text>
<text transform="translate(109.0,614.6) rotate(-45)" text-anchor="end" font-size="8.7" fill="#6e6e6e">8 PM</text>
<text transform="translate(131.2,614.6) rotate(-45)" text-anchor="end" font-size="8.7" fill="#6e6e6e">9 PM</text>
<text transform="translate(153.4,614.6) rotate(-45)" text-anchor="end" font-size="8.7" fill="#6e6e6e">10 PM</text>
<text transform="translate(175.7,614.6) rotate(-45)" text-anchor="end" font-size="8.7" fill="#6e6e6e">11 PM</text>
<text transform="translate(197.9,614.6) rotate(-45)" text-anchor="end" font-size="8.7" fill="#6e6e6e">Jan 19, 2022 12 AM</text>
<text transform="translate(220.1,614.6) rotate(-45)" text-anchor="end" font-size="8.7" fill="#6e6e6e">1 AM</text>
<text transform="translate(242.3,614.6) rotate(-45)" text-anchor="end" font-size="8.7" fill="#6e6e6e">2 AM</text>
<text transform="translate(264.5,614.6) rotate(-45)" text-anchor="end" font-size="8.7" fill="#6e6e6e">3 AM</text>
<text transform="translate(286.7,614.6) rotate(-45)" text-anchor="end" font-size="8.7" fill="#6e6e6e">4 AM</text>
<text transform="translate(308.9,614.6) rotate(-45)" text-anchor="end" font-size="8.7" fill="#6e6e6e">5 AM</text>
<text transform="translate(331.1,614.6) rotate(-45)" text-anchor="end" font-size="8.7" fill="#6e6e6e">6 AM</text>
<text transform="translate(353.4,614.6) rotate(-45)" text-anchor="end" font-size="8.7" fill="#6e6e6e">7 AM</text>
<text transform="translate(375.6,614.6) rotate(-45)" text-anchor="end" font-size="8.7" fill="#6e6e6e">8 AM</text>
<text transform="translate(397.8,614.6) rotate(-45)" text-anchor="end" font-size="8.7" fill="#6e6e6e">9 AM</text>
<text transform="translate(420.0,614.6) rotate(-45)" text-anchor="end" font-size="8.7" fill="#6e6e6e">10 AM</text>
<text transform="translate(442.2,614.6) rotate(-45)" text-anchor="end" font-size="8.7" fill="#6e6e6e">11 AM</text>
<text transform="translate(464.4,614.6) rotate(-45)" text-anchor="end" font-size="8.7" fill="#6e6e6e">12 PM</text>
<text transform="translate(486.6,614.6) rotate(-45)" text-anchor="end" font-size="8.7" fill="#6e6e6e">1 PM</text>
<text transform="translate(508.8,614.6) rotate(-45)" text-anchor="end" font-size="8.7" fill="#6e6e6e">2 PM</text>
<text transform="translate(531.1,614.6) rotate(-45)" text-anchor="end" font-size="8.7" fill="#6e6e6e">3 PM</text>
<text transform="translate(553.3,614.6) rotate(-45)" text-anchor="end" font-size="8.7" fill="#6e6e6e">4 PM</text>
<text transform="translate(575.5,614.6) rotate(-45)" text-anchor="end" font-size="8.7" fill="#6e6e6e">5 PM</text>
<text transform="translate(597.7,614.6) rotate(-45)" text-anchor="end" font-size="8.7" fill="#6e6e6e">6 PM</text>
<text x="314.8" y="435.8" text-anchor="middle" font-size="13" letter-spacing="0.5" fill="#333">Bishkek – PM2.5</text>
<text transform="translate(38,530) rotate(-90)" text-anchor="middle" font-size="9" fill="#333">AQI</text>
<rect x="298" y="689" width="12" height="8" fill="#cccccc"/>
<text x="314" y="697" font-size="9" font-weight="bold" fill="#333">AQI</text>
</svg>

<div id="cc" class="a">
</div>
<div class="a" style="left:625px;top:419px;width:186px;height:56px;background:#004a87"></div>
<div class="a" style="left:625px;top:475px;width:186px;height:87px;background:#ffff00"></div>
<div class="a" style="top:422.5px;font-size:11.25px;line-height:15px;left:625px;width:186px;text-align:center;white-space:nowrap;color:#fff;font-weight:bold">Current Conditions</div>
<div class="a" style="top:440.7px;font-size:9px;line-height:12px;left:625px;width:186px;text-align:center;white-space:nowrap;color:#fff;font-weight:bold">observed at</div>
<div class="a" style="top:454.6px;font-size:11.25px;line-height:15px;left:625px;width:186px;text-align:center;white-space:nowrap;color:#fff;font-weight:bold">Jan 19, 2022 6:00 PM (LT)</div>
<div class="a" style="top:486.6px;font-size:15px;line-height:20px;left:625px;width:186px;text-align:center;white-space:nowrap;color:#000;font-weight:bold">59 AQI</div>
<div class="a" style="top:508.8px;font-size:15px;line-height:20px;left:625px;width:186px;text-align:center;white-space:nowrap;color:#000;font-weight:bold">Moderate</div>
<div class="a" style="top:529.8px;font-size:15px;line-height:20px;left:625px;width:186px;text-align:center;white-space:nowrap;color:#000;font-weight:bold">PM2.5</div>
<div class="a" style="top:569.1px;font-size:9px;line-height:12px;left:625px;width:186px;text-align:center;white-space:nowrap;color:#333;font-weight:bold">Health Message</div>
<div class="a" style="top:586.7px;font-size:9px;line-height:16px;left:629px;text-align:left;white-space:nowrap;color:#333">The AQI is between 51 and 100. Air quality</div>
<div class="a" style="top:602.7px;font-size:9px;line-height:16px;left:629px;text-align:left;white-space:nowrap;color:#333">is acceptable; however, pollution in this</div>
<div class="a" style="top:618.7px;font-size:9px;line-height:16px;left:629px;text-align:left;white-space:nowrap;color:#333">range may pose a moderate health concern</div>
<div class="a" style="top:634.7px;font-size:9px;line-height:16px;left:629px;text-align:left;white-space:nowrap;color:#333">for a very small number of individuals.</div>
<div class="a" style="top:650.7px;font-size:9px;line-height:16px;left:629px;text-align:left;white-space:nowrap;color:#333">People who are unusually sensitive to ozone</div>
<div class="a" style="top:666.7px;font-size:9px;line-height:16px;left:629px;text-align:left;white-space:nowrap;color:#333">or particle pollution may experience</div>
<div class="a" style="top:682.7px;font-size:9px;line-height:16px;left:629px;text-align:left;white-space:nowrap;color:#333">respiratory symptoms.</div>
</body></html>
